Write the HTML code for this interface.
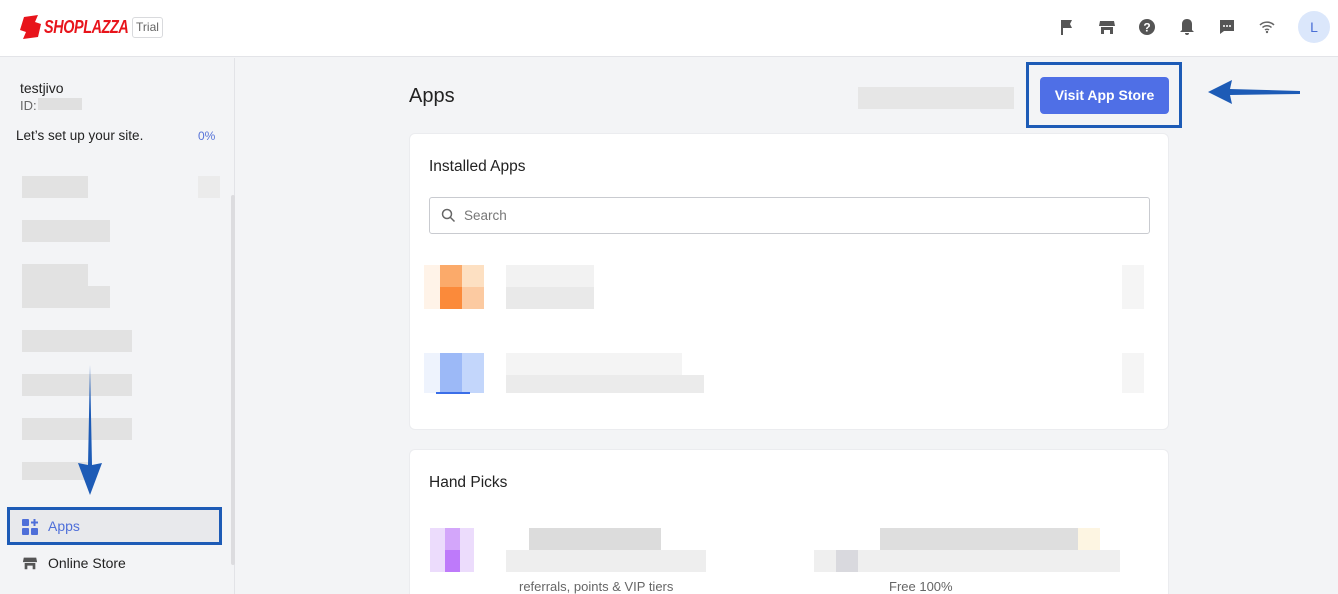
<!DOCTYPE html>
<html><head><meta charset="utf-8"><style>
*{box-sizing:border-box;margin:0;padding:0}
html,body{width:1338px;height:594px;overflow:hidden}
body{background:#f3f4f6;font-family:"Liberation Sans",sans-serif;color:#222;position:relative}
.abs{position:absolute}
.hdr{left:0;top:0;width:1338px;height:57px;background:#fff;border-bottom:1px solid #e3e4e8}
.side{left:0;top:58px;width:235px;height:536px;background:#f3f4f6;border-right:1px solid #e2e3e7}
.g{position:absolute;background:#e2e2e2}
.card{background:#fff;border-radius:6px;border:1px solid #ebecef}
.ic{position:absolute;top:18px;width:18px;height:18px}
</style></head><body>
<div class="abs hdr">
 <svg class="abs" style="left:20px;top:15px" width="22" height="24" viewBox="0 0 22 24"><path d="M4 2 L18 0 L15 7 L21 9 L18 22 L3 24 L6 17 L0 15 Z" fill="#e8141b"/></svg>
 <div class="abs" style="left:44px;top:17px;font:italic bold 18px 'Liberation Sans';color:#e8141b;letter-spacing:-0.5px;transform:scaleX(0.8);transform-origin:left top;white-space:nowrap">SHOPLAZZA</div>
 <div class="abs" style="left:132px;top:17px;width:31px;height:21px;border:1px solid #d9dadd;border-radius:3px;font-size:12px;color:#666;text-align:center;line-height:19px;background:#fff">Trial</div>
 <svg class="ic" style="left:1058px" viewBox="0 0 18 18"><path d="M3 2h11l-2 4 2 4H5v7H3z" fill="#555"/></svg>
 <svg class="ic" style="left:1098px" viewBox="0 0 18 18"><path d="M2 3h14l1 5H1z M3 9h12v7h-3v-4H6v4H3z" fill="#555"/></svg>
 <svg class="ic" style="left:1138px" viewBox="0 0 18 18"><circle cx="9" cy="9" r="8" fill="#555"/><text x="9" y="13.5" font-size="12" font-weight="bold" text-anchor="middle" fill="#fff" font-family="Liberation Sans">?</text></svg>
 <svg class="ic" style="left:1178px" viewBox="0 0 18 18"><path d="M9 1c-3 0-5 2-5 5v6l-2 2h14l-2-2V6c0-3-2-5-5-5z M7 15h4a2 2 0 0 1-4 0z" fill="#555"/></svg>
 <svg class="ic" style="left:1218px" viewBox="0 0 18 18"><path d="M2 2h14v11H6l-4 3z" fill="#555"/><circle cx="6" cy="8" r="1" fill="#fff"/><circle cx="9" cy="8" r="1" fill="#fff"/><circle cx="12" cy="8" r="1" fill="#fff"/></svg>
 <svg class="ic" style="left:1258px" viewBox="0 0 18 18"><path d="M2 7a10 10 0 0 1 14 0M4.5 9.5a6.5 6.5 0 0 1 9 0M7 12a3 3 0 0 1 4 0" stroke="#666" stroke-width="1.5" fill="none"/><circle cx="9" cy="14" r="1.2" fill="#666"/></svg>
 <div class="abs" style="left:1298px;top:11px;width:32px;height:32px;border-radius:50%;background:#dbe7fb;color:#4a6fd6;font-size:14px;text-align:center;line-height:32px">L</div>
</div>
<div class="abs side">
 <div class="abs" style="left:20px;top:22px;font-size:14px">testjivo</div>
 <div class="abs" style="left:20px;top:40px;font-size:13px;color:#666">ID:</div>
 <div class="g" style="left:38px;top:40px;width:44px;height:12px;background:#e0e0e0"></div>
 <div class="abs" style="left:16px;top:70px;font-size:13.5px">Let’s set up your site.</div>
 <div class="abs" style="left:198px;top:71px;font-size:12px;color:#5874d8">0%</div>
 <div class="g" style="left:22px;top:118px;width:66px;height:22px"></div>
 <div class="g" style="left:198px;top:118px;width:22px;height:22px;background:#ebebeb"></div>
 <div class="g" style="left:22px;top:162px;width:88px;height:22px"></div>
 <div class="g" style="left:22px;top:206px;width:66px;height:22px"></div>
 <div class="g" style="left:22px;top:228px;width:88px;height:22px"></div>
 <div class="g" style="left:22px;top:272px;width:110px;height:22px"></div>
 <div class="g" style="left:22px;top:316px;width:110px;height:22px"></div>
 <div class="g" style="left:22px;top:360px;width:110px;height:22px"></div>
 <div class="g" style="left:22px;top:404px;width:66px;height:18px"></div>
 <div class="abs" style="left:231px;top:137px;width:4px;height:370px;background:#dcdcdf;border-radius:2px"></div>
 <div class="abs" style="left:7px;top:449px;width:215px;height:38px;background:#e8e9ec;border:3px solid #1d5bb6"></div>
 <svg class="abs" style="left:22px;top:461px" width="16" height="16" viewBox="0 0 16 16"><rect x="0" y="0" width="7" height="7" rx="1" fill="#4f6fd9"/><rect x="0" y="9" width="7" height="7" rx="1" fill="#4f6fd9"/><rect x="9" y="9" width="7" height="7" rx="1" fill="#4f6fd9"/><path d="M12.5 0v7M9 3.5h7" stroke="#4f6fd9" stroke-width="2"/></svg>
 <div class="abs" style="left:48px;top:460px;font-size:14px;color:#4f6fd9">Apps</div>
 <svg class="abs" style="left:22px;top:497px" width="16" height="16" viewBox="0 0 18 18"><path d="M2 3h14l1 5H1z M3 9h12v7h-3v-4H6v4H3z" fill="#555"/></svg>
 <div class="abs" style="left:48px;top:497px;font-size:14px">Online Store</div>
</div>
<svg class="abs" style="left:76px;top:365px" width="28" height="132" viewBox="0 0 28 132"><path d="M14 0 L16 100 L26 98 L14 130 L2 98 L12 100 Z" fill="#1d5bb6"/></svg>
<div class="abs" style="left:409px;top:85px;font-size:20px">Apps</div>
<div class="g" style="left:858px;top:87px;width:156px;height:22px;background:#e6e6e6"></div>
<div class="abs" style="left:1026px;top:62px;width:156px;height:66px;border:3px solid #1d5bb6;background:#f3f4f6"></div>
<div class="abs" style="left:1040px;top:77px;width:129px;height:37px;background:#4f6fe6;border-radius:4px;color:#fff;font-size:14px;font-weight:bold;text-align:center;line-height:37px">Visit App Store</div>
<svg class="abs" style="left:1208px;top:78px" width="94" height="28" viewBox="0 0 94 28"><path d="M92 13 L22 11 L24 2 L0 14 L24 26 L22 17 L92 16 Z" fill="#1d5bb6"/></svg>
<div class="abs card" style="left:409px;top:133px;width:760px;height:297px">
 <div class="abs" style="left:19px;top:24px;font-size:15.5px">Installed Apps</div>
 <div class="abs" style="left:19px;top:63px;width:721px;height:37px;border:1px solid #c9cbd0;border-radius:3px">
  <svg class="abs" style="left:11px;top:10px" width="15" height="15" viewBox="0 0 15 15"><circle cx="6" cy="6" r="4.5" stroke="#666" stroke-width="1.5" fill="none"/><path d="M9.5 9.5l4 4" stroke="#666" stroke-width="1.5"/></svg>
  <div class="abs" style="left:34px;top:10px;font-size:13.5px;color:#777">Search</div>
 </div>
 <div class="g" style="left:14px;top:131px;width:16px;height:44px;background:#fff3e8"></div>
 <div class="g" style="left:30px;top:131px;width:22px;height:22px;background:#fbaa6a"></div>
 <div class="g" style="left:52px;top:131px;width:22px;height:22px;background:#fde0c2"></div>
 <div class="g" style="left:30px;top:153px;width:22px;height:22px;background:#fb8a3a"></div>
 <div class="g" style="left:52px;top:153px;width:22px;height:22px;background:#fccaa1"></div>
 <div class="g" style="left:96px;top:131px;width:88px;height:22px;background:#f2f2f2"></div>
 <div class="g" style="left:96px;top:153px;width:88px;height:22px;background:#e9e9e9"></div>
 <div class="g" style="left:14px;top:219px;width:16px;height:40px;background:#eef3fd"></div>
 <div class="g" style="left:30px;top:219px;width:22px;height:40px;background:#9cb9f7"></div>
 <div class="g" style="left:52px;top:219px;width:22px;height:40px;background:#c3d6fb"></div>
 <div class="g" style="left:26px;top:258px;width:34px;height:2px;background:#3a6ee8"></div>
 <div class="g" style="left:96px;top:219px;width:176px;height:22px;background:#f4f4f4"></div>
 <div class="g" style="left:96px;top:241px;width:198px;height:18px;background:#ebebeb"></div>
 <div class="g" style="left:712px;top:131px;width:22px;height:44px;background:#f5f5f5"></div>
 <div class="g" style="left:712px;top:219px;width:22px;height:40px;background:#f5f5f5"></div>
</div>
<div class="abs card" style="left:409px;top:449px;width:760px;height:160px">
 <div class="abs" style="left:19px;top:24px;font-size:15.5px">Hand Picks</div>
 <div class="g" style="left:20px;top:78px;width:44px;height:44px;background:#ecdcfc"></div>
 <div class="g" style="left:35px;top:78px;width:15px;height:22px;background:#d3a6fa"></div>
 <div class="g" style="left:35px;top:100px;width:15px;height:22px;background:#be7afa"></div>
 <div class="g" style="left:119px;top:78px;width:132px;height:22px;background:#dcdcdc"></div>
 <div class="g" style="left:96px;top:100px;width:200px;height:22px;background:#eeeeee"></div>
 <div class="abs" style="left:109px;top:129px;font-size:13px;color:#666">referrals, points &amp; VIP tiers</div>
 <div class="g" style="left:404px;top:100px;width:74px;height:22px;background:#efefef"></div>
 <div class="g" style="left:426px;top:100px;width:22px;height:22px;background:#d9d9de"></div>
 <div class="g" style="left:470px;top:78px;width:198px;height:22px;background:#dedede"></div>
 <div class="g" style="left:470px;top:100px;width:240px;height:22px;background:#efefef"></div>
 <div class="g" style="left:668px;top:78px;width:22px;height:22px;background:#fdf5e2"></div>
 <div class="abs" style="left:479px;top:129px;font-size:13px;color:#666">Free 100%</div>
</div>
</body></html>
